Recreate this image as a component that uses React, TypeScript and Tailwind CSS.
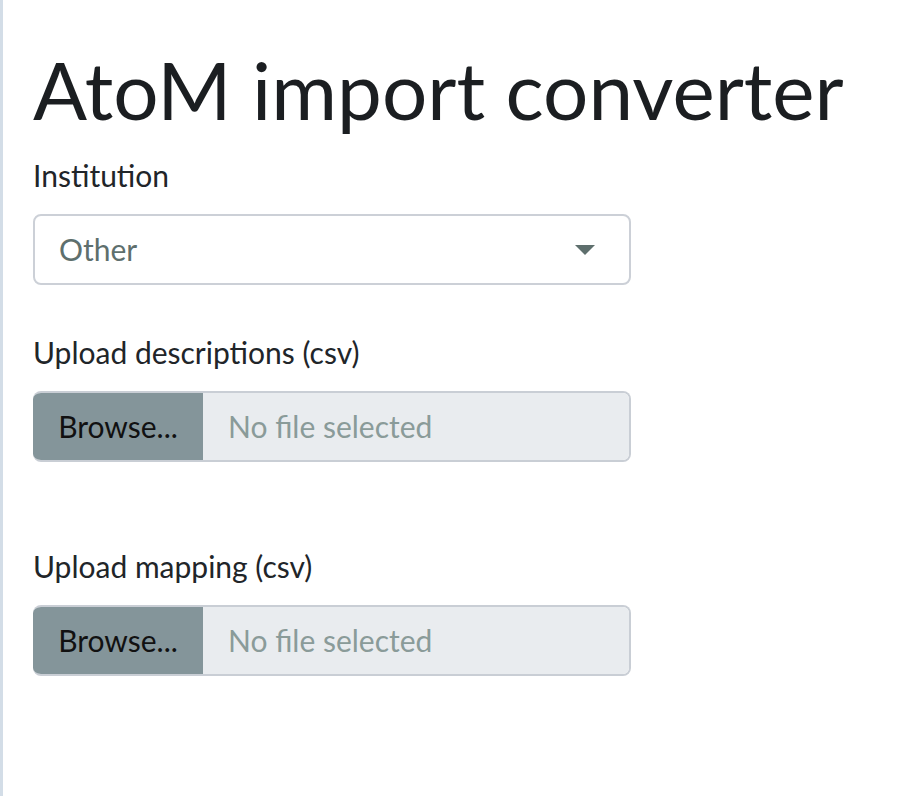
export default function App() {
  return (
    <div
      className="min-h-screen bg-white border-l-[3px] border-[#d3dde7] pl-[30px] pt-[41px] text-[#212529]"
      style={{ fontFamily: "Lato, 'Open Sans', sans-serif" }}
    >
      <h1 className="text-[80px] leading-[1.2] font-normal text-[#1b1e21] whitespace-nowrap">
        AtoM import converter
      </h1>

      <div className="mt-[17px] w-[598px]">
        <label className="block text-[30px] leading-[42px] mb-[18px]">Institution</label>
        <div className="relative h-[71px] rounded-[8px] border-2 border-[#ccd0d7] bg-white flex items-center pl-[24px]">
          <span className="text-[30px] text-[#5e6f6d]">Other</span>
          <span className="absolute right-[34px] top-[29px] w-0 h-0 border-l-[10px] border-r-[10px] border-t-[10px] border-l-transparent border-r-transparent border-t-[#5e6f6d]" />
        </div>
      </div>

      <FileField label="Upload descriptions (csv)" className="mt-[46px]" />
      <FileField label="Upload mapping (csv)" className="mt-[83px]" />
    </div>
  );
}

function FileField({ label, className }: { label: string; className: string }) {
  return (
    <div className={"w-[598px] " + className}>
      <label className="block text-[30px] leading-[42px] mb-[18px]">{label}</label>
      <div className="flex h-[71px] rounded-[8px] overflow-hidden border-2 border-l-0 border-[#c9ced5]">
        <button className="w-[170px] bg-[#84959a] text-[30px] text-[#111] text-center">Browse...</button>
        <div className="flex-1 bg-[#e9ecef] flex items-center pl-[25px] text-[30px] text-[#8a9b99]">
          No file selected
        </div>
      </div>
    </div>
  );
}
